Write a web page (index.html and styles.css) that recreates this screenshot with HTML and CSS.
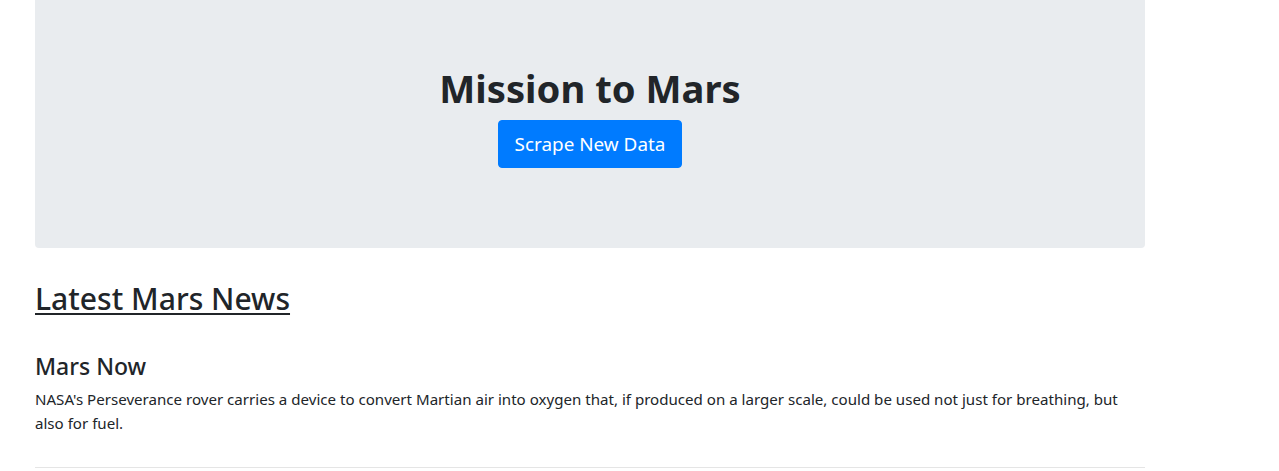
FILE: index.html
```html
<!DOCTYPE html>
<html>
<head>
<meta charset="utf-8">
<link rel="stylesheet" href="styles.css">
</head>
<body>
<div class="container">
  <div class="jumbotron">
    <h1 class="title">Mission to Mars</h1>
    <p class="actions"><a class="btn" href="#">Scrape New Data</a></p>
  </div>
  <section class="news">
    <h2 class="section-title">Latest Mars News</h2>
    <h4 class="news-title">Mars Now</h4>
    <p class="news-body">NASA's Perseverance rover carries a device to convert Martian air into oxygen that, if produced on a larger scale, could be used not just for breathing, but also for fuel.</p>
    <hr class="divider">
  </section>
</div>
</body>
</html>
```

FILE: styles.css
```css
html, body {
  margin: 0;
  padding: 0;
  background: #fff;
}
body {
  font-family: "Noto Sans", "Open Sans", sans-serif;
  font-size: 15.1px;
  line-height: 24px;
  color: #212529;
}
.container {
  width: 1110px;
  padding: 0 15px;
  margin-left: 20px;
}
.jumbotron {
  background: #e9ecef;
  border-radius: 0 0 4px 4px;
  padding: 64px 32px;
  margin-bottom: 32px;
  text-align: center;
}
.title {
  margin: 0 0 8px;
  font-size: 38.2px;
  line-height: 48px;
  font-weight: 700;
}
.actions {
  margin: 0 0 16px;
}
.btn {
  display: inline-block;
  background: #007bff;
  color: #fff;
  text-decoration: none;
  font-size: 18.9px;
  line-height: 30px;
  padding: 8px 16px;
  border: 1px solid #007bff;
  border-radius: 4px;
}
.section-title {
  margin: 0 0 8px;
  font-size: 30.1px;
  line-height: 38.4px;
  font-weight: 500;
  text-decoration: underline;
  text-decoration-thickness: 2px;
  text-underline-offset: 3px;
}
.news-title {
  margin: 34px 0 6px;
  font-size: 23px;
  line-height: 28.8px;
  font-weight: 500;
}
.news-body {
  margin: 0 0 32px;
}
.divider {
  margin: 0 0 16px;
  border: 0;
  border-top: 1px solid rgba(0,0,0,0.1);
}
```
